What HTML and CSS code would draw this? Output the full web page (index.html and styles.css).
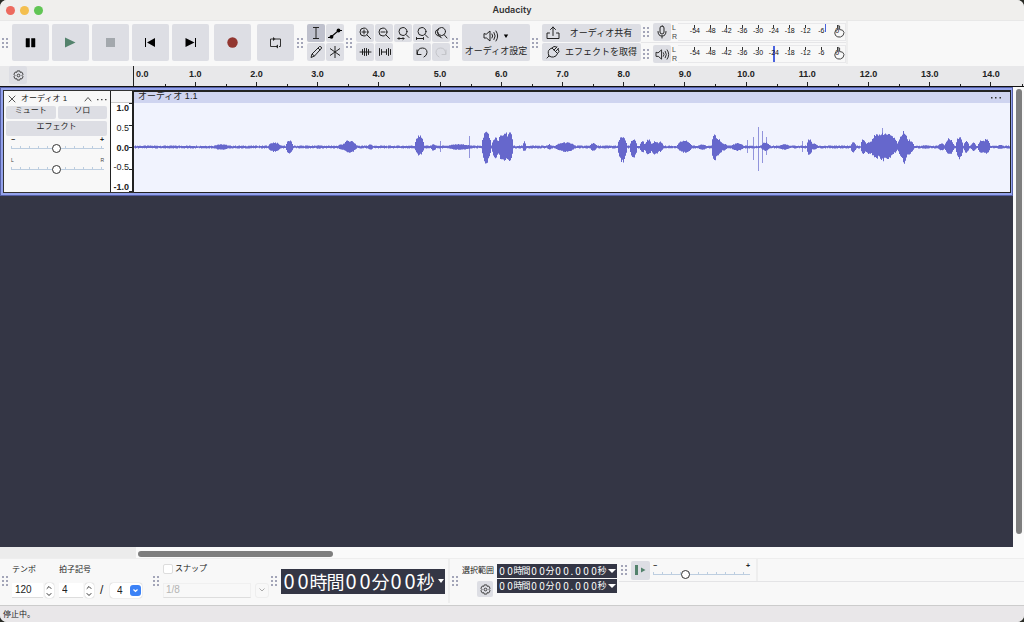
FILE: index.html
```html
<!DOCTYPE html>
<html lang="ja">
<head>
<meta charset="utf-8">
<title>Audacity</title>
<link rel="stylesheet" href="styles.css">
</head>
<body>
<svg class="defs" aria-hidden="true">
  <symbol id="gear" viewBox="0 0 12 12"><path d="M4.600 1h2.800l.5 1.600 1.600-.4L11 4.600 9.900 6 11 7.400 9.500 9.800l-1.600-.4L7.400 11H4.600l-.5-1.600-1.600.4L1 7.400 2.100 6 1 4.600l1.500-2.400 1.600.4z" fill="none" stroke="#333" stroke-linejoin="round"/><circle cx="6" cy="6" r="1.500" fill="none" stroke="#333"/></symbol>
  <symbol id="speaker" viewBox="0 0 16 14"><path d="M1 5v4h2.500L7 12V2L3.500 5zM9 5q1.500 2 0 4M11 3.500q2.500 3.500 0 7M13 2q3.500 5 0 10" fill="none" stroke="#222" stroke-linejoin="round" stroke-linecap="round"/></symbol>
  <symbol id="hand" viewBox="0 0 12 14"><path d="M5 5.500V2q.8-1 1.600 0v3.500M5 5.500l-2.500 1Q1 9 2.500 11.500q2 2 5 1.500Q11 12 11 8.500 10.500 5.500 6.600 5.500" fill="none" stroke="#444"/></symbol>
</svg>
<div class="window">
  <header class="titlebar">
    <div class="lights"><button class="light close" aria-label="閉じる"></button><button class="light mini" aria-label="しまう"></button><button class="light full" aria-label="拡大"></button></div>
    <h1>Audacity</h1>
  </header>

  <div class="toolbar">
    <i class="grip"></i>
    <div class="transport">
      <button class="btn" aria-label="一時停止"><svg width="37" height="37"><path d="M14 14.500h3.500v8.500H14zM19.500 14.500H23V23h-3.500z" stroke="#000" stroke-width=".5"/></svg></button>
      <button class="btn" aria-label="再生"><svg width="37" height="37"><path d="M13 13.500v10l10.500-5z" fill="#53826c"/></svg></button>
      <button class="btn" aria-label="停止"><svg width="37" height="37"><path d="M14 14h9v9h-9z" fill="#a3a8ad"/></svg></button>
      <button class="btn" aria-label="先頭へ"><svg width="37" height="37"><path d="M13 14h1v9h-1zM23 14v9l-8-4.500z"/></svg></button>
      <button class="btn" aria-label="末尾へ"><svg width="37" height="37"><path d="M23 14h1v9h-1zM13.500 14v9l9-4.500z"/></svg></button>
      <button class="btn record" aria-label="録音"><svg width="37" height="37"><circle cx="18.500" cy="18.500" r="5.200" fill="#923630"/></svg></button>
      <button class="btn loop" aria-label="ループ"><svg width="37" height="37"><path d="M16 15h-2.500v7.500H20M18 15h5.500v7.500H22" fill="none" stroke="#333"/><path d="M16 13l2.500 2-2.500 2zM21 20.500l-2.500 2 2.500 2z" fill="#222"/></svg></button>
    </div>
    <i class="grip"></i>
    <div class="tiles two">
      <button class="btn on" aria-label="選択ツール"><svg width="18" height="18"><path d="M6 3.500h6M6 14.500h6M9 3.500v11" fill="none" stroke="#222"/></svg></button>
      <button class="btn" aria-label="エンベロープツール"><svg width="18" height="18"><path d="M2 13.500h2.500l8-7H16" fill="none" stroke="#000" stroke-width="1.200"/><circle cx="5.500" cy="12.800" r="1.900"/><circle cx="12.500" cy="6.500" r="1.900"/></svg></button>
      <button class="btn" aria-label="描画ツール"><svg width="18" height="18"><path d="M4 14.500l1-3.500 7.500-7.500q1.500-.5 2.200 1.500L7.500 13zM11 5l2.200 2.200M5 11l2.500 2" fill="none" stroke="#222"/></svg></button>
      <button class="btn" aria-label="マルチツール"><svg width="18" height="18"><path d="M9 3v12M4 5.500l10 7M14 5.500l-10 7" fill="none" stroke="#222"/></svg></button>
    </div>
    <i class="grip"></i>
    <div class="tiles five">
      <button class="btn" aria-label="ズームイン"><svg class="ic" width="18" height="18"><circle cx="8" cy="8" r="4"/><path d="M11 11l3.500 3.500M6 8h4M8 6v4"/></svg></button>
      <button class="btn" aria-label="ズームアウト"><svg class="ic" width="18" height="18"><circle cx="8" cy="8" r="4"/><path d="M11 11l3.500 3.500M6 8h4"/></svg></button>
      <button class="btn" aria-label="選択範囲に合わせる"><svg class="ic" width="18" height="18"><circle cx="9" cy="7.500" r="4"/><path d="M12 10.500l3 3M4 14.500h6M5 13.500l-1 1 1 1M9 13.500l1 1-1 1"/></svg></button>
      <button class="btn" aria-label="全体に合わせる"><svg class="ic" width="18" height="18"><circle cx="9" cy="7.500" r="4"/><path d="M12 10.500l3 3M3.500 14.500h7M3.500 13.500v2M10.500 13.500v2"/></svg></button>
      <button class="btn" aria-label="ズーム切り替え"><svg class="ic" width="18" height="18"><circle cx="9.500" cy="7.500" r="4"/><path d="M12 10.500l3 3.500M6.500 5q-4 1.500-3 4.500 1.500 3 4 2.500l2 2M5.500 8q0 4 3 5"/></svg></button>
      <button class="btn" aria-label="トリム"><svg class="ic" width="18" height="18"><path d="M4 9h11M6.500 6.500v5M8.500 5.500v7M10.500 5.500v7M12.500 6.500v5"/></svg></button>
      <button class="btn" aria-label="無音化"><svg class="ic" width="18" height="18"><path d="M4.500 5.500v7M6.500 6.500v5M6.500 9h5M11.500 6.500v5M13.500 5.500v7M15.500 6.500v5"/></svg></button>
      <span></span>
      <button class="btn" aria-label="元に戻す"><svg class="ic" width="18" height="18"><path d="M4 7v4.500h4M4.300 11q0-6 5.200-6 4.500.3 4.500 4.500 0 3-3 4.500"/></svg></button>
      <button class="btn" aria-label="やり直す" disabled><svg class="ic dim" width="18" height="18"><path d="M14 7v4.500h-4M13.700 11q0-6-5.200-6-4.500.3-4.500 4.500 0 3 3 4.500"/></svg></button>
    </div>
    <i class="grip"></i>
    <button class="btn setup"><span class="setup-icon"><svg width="16" height="14"><use href="#speaker"/></svg><svg width="6" height="6"><path d="M.8 1.500h4.400L3 5z"/></svg></span>オーディオ設定</button>
    <i class="grip"></i>
    <div class="share">
      <button class="btn"><svg class="ic" width="16" height="16"><path d="M4.500 8H2v5.500h12V8h-2.500M8 10.500V2M5.500 4.500L8 2l2.500 2.500"/></svg><span>オーディオ共有</span></button>
      <button class="btn"><svg class="ic" width="16" height="16"><path d="M2 14l2-2q-2-5 1-7l2-1 5.500 5.500q-1 3-4 3.500-2 .5-4.500-1M7 4l2-1.500 2.500.5M12.500 9.500L14 7.500 13 5M9 6l3-3M10.500 7.500l3-3"/></svg><span>エフェクトを取得</span></button>
    </div>
    <div class="meters">
      <div class="meter">
        <i class="grip"></i>
        <button class="btn" aria-label="録音メーター"><svg class="ic" width="18" height="18"><rect x="7" y="3" width="4" height="8" rx="2"/><path d="M5 8.500q0 4.500 4 4.500t4-4.500M9 13v2"/></svg></button>
        <div class="lr"><span>L</span><span>R</span></div>
        <div class="scale"><span>-54</span><span>-48</span><span>-42</span><span>-36</span><span>-30</span><span>-24</span><span>-18</span><span>-12</span><span class="mark-half">-6</span><span class="zero">0<svg width="12" height="14"><use href="#hand"/></svg></span></div>
      </div>
      <div class="meter">
        <i class="grip"></i>
        <button class="btn" aria-label="再生メーター"><svg width="15" height="13"><use href="#speaker"/></svg></button>
        <div class="lr"><span>L</span><span>R</span></div>
        <div class="scale"><span>-54</span><span>-48</span><span>-42</span><span>-36</span><span>-30</span><span class="mark">-24</span><span>-18</span><span>-12</span><span>-6</span><span class="zero">0<svg width="12" height="14"><use href="#hand"/></svg></span></div>
      </div>
    </div>
  </div>

  <div class="timeline">
    <div class="timeline-head"><button class="gear" aria-label="タイムライン設定"><svg width="11" height="11"><use href="#gear"/></svg></button></div>
    <div class="ruler"><span>0.0</span><span>1.0</span><span>2.0</span><span>3.0</span><span>4.0</span><span>5.0</span><span>6.0</span><span>7.0</span><span>8.0</span><span>9.0</span><span>10.0</span><span>11.0</span><span>12.0</span><span>13.0</span><span>14.0</span><span class="last"></span></div>
  </div>

  <main class="workspace">
    <div class="tracks">
      <section class="track">
        <div class="panel">
          <div class="panel-title"><button aria-label="トラックを閉じる"><svg class="ic soft" width="8" height="8"><path d="M1 1l6 6M7 1L1 7"/></svg></button><h2>オーディオ 1</h2><button aria-label="折りたたむ"><svg class="ic soft" width="8" height="8"><path d="M1 6l3-3.500L7 6"/></svg></button><button aria-label="メニュー"><svg width="10" height="3"><path d="M0 1h1.500v1.200H0zM4 1h1.500v1.200H4zM8 1h1.500v1.200H8z" fill="#444"/></svg></button></div>
          <div class="panel-buttons"><button>ミュート</button><button>ソロ</button><button class="wide">エフェクト</button></div>
          <label class="slider"><span class="ends"><b>−</b><b>+</b></span><input type="range" aria-label="音量" min="0" max="100" value="49"></label>
          <label class="slider"><span class="ends"><small>L</small><small>R</small></span><input type="range" aria-label="パン" min="0" max="100" value="49"></label>
        </div>
        <div class="vruler"><div class="vruler-top"></div><div class="vscale"><b>1.0</b><span>0.5</span><b>0.0</b><span>-0.5</span><b>-1.0</b></div></div>
        <div class="clip">
          <div class="clip-title"><span>オーディオ 1.1</span><button aria-label="クリップメニュー"><svg width="12" height="3"><path d="M1 1h1.500v1.500H1zM5 1h1.500v1.500H5zM9.500 1H11v1.500H9.500z" fill="#333"/></svg></button></div>
          <svg class="wave" viewBox="0 0 876 89" preserveAspectRatio="none"><path id="spikes" fill="#9294dc"/><path id="wave" fill="#6667cc"/></svg>
        </div>
      </section>
    </div>
    <div class="vscroll"><div class="thumb"></div></div>
  </main>
  <div class="hscroll"><div class="thumb"></div></div>

  <footer class="bottom">
    <i class="grip"></i>
    <div class="signature">
      <label for="tempo">テンポ</label><label class="wide" for="beats">拍子記号</label>
      <div class="stepper"><input id="tempo" value="120"><button aria-label="テンポ増減"><svg class="ic heavy" width="8" height="14"><path d="M2 4.500l2-2 2 2M2 9.500l2 2 2-2"/></svg></button></div>
      <div class="stepper small"><input id="beats" value="4"><button aria-label="拍子増減"><svg class="ic heavy" width="8" height="14"><path d="M2 4.500l2-2 2 2M2 9.500l2 2 2-2"/></svg></button></div>
      <span class="slash">/</span>
      <div class="pick"><select aria-label="音符"><option>4</option></select><svg width="11" height="11"><path d="M3.500 4.500l2 2 2-2" fill="none" stroke="#fff" stroke-width="1.200"/></svg></div>
    </div>
    <i class="grip"></i>
    <div class="snap">
      <label><input type="checkbox">スナップ</label>
      <div class="snap-row"><select aria-label="スナップ単位" disabled><option>1/8</option></select><span class="snap-arrow"><svg width="8" height="8"><path d="M1.500 2.500L4 5l2.500-2.500" fill="none" stroke="#aaa"/></svg></span></div>
    </div>
    <i class="grip"></i>
    <div class="time big"><span>0</span><span>0</span><em>時</em><em>間</em><span>0</span><span>0</span><em>分</em><span>0</span><span>0</span><em>秒</em><button aria-label="表示形式"></button></div>
    <div class="selection">
      <i class="grip"></i>
      <div class="sel-head"><span>選択範囲</span><button class="gear" aria-label="選択範囲設定"><svg width="11" height="11"><use href="#gear"/></svg></button></div>
      <div class="sel-times">
        <div class="time"><span>0</span><span>0</span><em>時</em><em>間</em><span>0</span><span>0</span><em>分</em><span>0</span><span>0</span><i>.</i><span>0</span><span>0</span><span>0</span><em>秒</em><button aria-label="開始の表示形式"></button></div>
        <div class="time"><span>0</span><span>0</span><em>時</em><em>間</em><span>0</span><span>0</span><em>分</em><span>0</span><span>0</span><i>.</i><span>0</span><span>0</span><span>0</span><em>秒</em><button aria-label="終了の表示形式"></button></div>
      </div>
    </div>
    <div class="speed">
      <i class="grip"></i>
      <button class="btn" aria-label="指定速度で再生"><svg width="19" height="19"><path d="M4 4h3v10H4zM10 6.500v5L14.500 9z" fill="#53826c"/></svg></button>
      <label class="slider"><span class="ends"><b>−</b><b>+</b></span><input type="range" aria-label="再生速度" min="0" max="100" value="32"></label>
    </div>
  </footer>
  <div class="status">停止中。</div>
</div>
<script src="wave.js"></script>
</body>
</html>
```

FILE: styles.css
```css
* { box-sizing: border-box; }
body {
  margin: 0; height: 100vh; background: #2a2c26; color: #222;
  font: 9px/12px "Liberation Sans", "Noto Sans CJK JP", sans-serif;
}
button, input, select { font: inherit; color: inherit; border: 0; padding: 0; margin: 0; background: none; border-radius: 0; }
h1, h2 { margin: 0; font-size: inherit; }
svg { display: block; }
em, i { font-style: normal; }
.defs { position: absolute; width: 0; height: 0; }
.window { height: 100%; display: flex; flex-direction: column; background: #f8f8f8; border-radius: 7px; overflow: hidden; }
.ic { fill: none; stroke: #222; stroke-linecap: round; stroke-linejoin: round; }
.dim { stroke: #c4c5ca; }
.soft { stroke: #555; }
.heavy { stroke: #333; }

.titlebar { height: 20px; display: grid; grid-template-columns: 1fr auto 1fr; align-items: center; background: #f0efed; flex: none; }
.titlebar h1 { font: 600 9px/12px Inter, sans-serif; color: #333; }
.lights { display: flex; gap: 5px; padding-left: 6px; }
.light { width: 9px; height: 9px; border-radius: 50%; }
.close { background: #ed6a5e; }
.mini { background: #f4bf4f; }
.full { background: #61c554; }

.toolbar { display: flex; align-items: center; height: 46px; padding-bottom: 2px; border-top: 1px solid #e8e8e8; flex: none; }
.grip { flex: none; width: 12px; height: 12px; background: radial-gradient(circle, #a3a5b8 0 1px, transparent 1px) 0 0 / 4px 4px content-box; padding: 0 3px 0 1px; }
.btn { display: flex; align-items: center; justify-content: center; background: #dddee4; border-radius: 2px; }
.btn.on { background: #bfc1cd; }
.transport { display: flex; gap: 3px; padding-right: 1px; }
.transport .btn { width: 37px; height: 37px; }
.transport .record { margin-left: 2px; }
.transport .loop { margin-left: 3px; }
.tiles { display: grid; grid-auto-rows: 18px; gap: 1px; }
.two { grid-template-columns: repeat(2, 18px); }
.five { grid-template-columns: repeat(5, 18px); }
.setup { flex-direction: column; width: 68px; height: 37px; gap: 2px; white-space: nowrap; }
.setup-icon { display: flex; align-items: center; gap: 4px; }
.share { display: grid; grid-auto-rows: 18px; gap: 1px; width: 99px; }
.share .btn { padding-left: 3px; justify-content: flex-start; }
.share span { flex: 1; white-space: nowrap; }
.meters { display: grid; grid-template-rows: 21px 23px; width: 207px; height: 100%; border-right: 2px solid #eee; }
.meter { display: flex; align-items: center; }
.meter + .meter { border-top: 1px solid #e6e6e8; }
.meter .btn { width: 18px; height: 18px; flex: none; }
.lr { display: flex; flex-direction: column; width: 7px; padding-left: 1px; font-size: 7px; line-height: 9px; color: #444; }
.scale { flex: 1; display: grid; grid-template-columns: repeat(10, 1fr); height: 18px; padding-left: 9px; border: solid #e8e8ea; border-width: 1px 1px 1px 0; font-size: 7px; line-height: 14px; text-align: center; color: #111; }
.scale span { background: linear-gradient(#333, #333) 50% 1px / 1px 3px no-repeat; }
.scale .mark { background: linear-gradient(#4a62dd, #4a62dd) 50% 0 / 2px 100% no-repeat; }
.scale .mark-half { background: linear-gradient(#4a62dd, #4a62dd) 80% 0 / 1px 8px no-repeat; }
.scale .zero { position: relative; }
.zero svg { position: absolute; left: 4px; top: 0; }

.timeline { display: flex; height: 21px; background: #e8e8ea; border-bottom: 1px solid #111; flex: none; }
.timeline-head { width: 134px; padding: 0 0 0 9px; border-right: 1px solid #222; }
.gear { display: flex; align-items: center; justify-content: center; width: 18px; height: 18px; background: #dddee4; border-radius: 2px; }
.ruler { flex: 1; display: grid; grid-template-columns: 50fr repeat(14, 100fr) 4fr; font-weight: bold; line-height: 17px; text-align: center; }
.ruler span { min-width: 0; background: linear-gradient(#222, #222) 50% 100% / 1px 4px no-repeat, linear-gradient(#222, #222) 0 100% / 1px 2px no-repeat; }
.ruler span:first-child { text-align: left; padding-left: 2px; background: none; }
.ruler .last { background: linear-gradient(#222, #222) 0 100% / 1px 2px no-repeat; }

.workspace { flex: 1; min-height: 0; display: flex; background: #fafafa; }
.tracks { flex: 1; background: #343645; }
.track { display: flex; height: 109px; border: solid #93a2ec; border-width: 3px 2px 3px 3px; box-shadow: inset 0 0 0 1px #333; outline: 1px solid #555fa5; outline-offset: -1px; }
.panel { width: 106px; margin: 1px 0 1px 1px; padding: 1px 3px 0 2px; background: #f8f8f8; }
.panel-title { display: flex; align-items: center; gap: 5px; height: 14px; padding: 0 0 0 2px; }
.panel-title h2 { flex: 1; font-size: 8px; font-weight: normal; white-space: nowrap; }
.panel-buttons { display: grid; grid-template-columns: 1fr 1fr; gap: 2px; font-size: 8px; }
.panel-buttons button { height: 13px; line-height: 8px; padding-bottom: 4px; background: #dddee4; border-radius: 2px; }
.panel-buttons .wide { grid-column: span 2; height: 15px; }
.slider { display: block; padding: 0 3px 0 5px; }
.ends { display: flex; justify-content: space-between; font-size: 7px; line-height: 7px; height: 6px; }
.ends small { font-size: 5px; color: #444; }
.slider input { display: block; appearance: none; width: 100%; height: 11px; background: linear-gradient(#bdcee0, #bdcee0) 0 6px / 100% 1px no-repeat, repeating-linear-gradient(90deg, #bdcee0 0 1px, transparent 1px 9px) 0 4px / 100% 2px no-repeat; }
.slider + .slider { padding-top: 4px; }
.slider input::-webkit-slider-thumb { appearance: none; width: 9px; height: 9px; border: 1px solid #333; border-radius: 50%; background: #fff; margin-top: 1px; }
.vruler { width: 24px; margin: 1px 0; background: #fff; border: solid #222; border-width: 0 2px 0 1px; display: flex; flex-direction: column; }
.vruler-top { height: 12px; background: #f5f5f7; border-bottom: 1px solid #ccc; }
.vscale { flex: 1; display: flex; flex-direction: column; justify-content: space-between; text-align: right; padding-right: 3px; line-height: 10px; background: repeating-linear-gradient(#222 0 1px, transparent 1px 22px) 100% 0 / 3px 100% no-repeat; }
.clip { flex: 1; display: flex; flex-direction: column; background: #f1f3fe; border: solid #222; border-width: 2px 1px 1px 0; }
.clip-title { display: flex; align-items: center; justify-content: space-between; height: 11px; padding: 0 8px 0 4px; background: #cfd4f0; }
.clip-title span { line-height: 9px; height: 12px; }
.wave { flex: 1; width: 100%; min-height: 0; }
.vscroll { width: 11px; padding: 2px 2px 13px 3px; }
.vscroll .thumb { height: 100%; border-radius: 3px; background: #7e7e7e; }
.hscroll { height: 12px; padding: 4px 0 2px 138px; background: linear-gradient(90deg, #ececec 136px, #fafafa 136px); border-bottom: 1px solid #eee; flex: none; }
.hscroll .thumb { width: 22%; height: 6px; border-radius: 3px; background: #7e7e7e; }

.bottom { display: flex; height: 46px; align-items: center; padding-bottom: 2px; flex: none; }
.signature { display: grid; grid-template-columns: 47px 39px 12px 32px; align-content: center; width: 139px; row-gap: 7px; font-size: 8px; }
.signature .wide { grid-column: 2 / 5; }
.stepper { display: flex; height: 15px; gap: 2px; font-size: 10px; }
.stepper input { width: 31px; padding-left: 3px; background: #fff; border-bottom: 1px solid #ddd; }
.stepper.small input { width: 24px; }
.stepper button { width: 9px; background: #fff; border-radius: 3px; box-shadow: 0 0 1px #999; }
.slash { font-size: 12px; line-height: 15px; padding-left: 2px; }
.pick { display: flex; align-items: center; height: 15px; background: #fff; border-radius: 3px; box-shadow: 0 0 1px #999; font-size: 10px; }
.pick select { appearance: none; width: 20px; padding-left: 7px; }
.pick svg { background: #3c82f6; border-radius: 3px; }
.snap { width: 106px; display: flex; flex-direction: column; gap: 8px; font-size: 8px; padding-bottom: 2px; }
.snap label { display: flex; align-items: center; gap: 2px; }
.snap label input { appearance: none; width: 10px; height: 10px; background: #fff; border: 1px solid #ddd; border-radius: 2px; }
.snap-row { display: flex; gap: 4px; font-size: 10px; color: #b4b4b4; }
.snap-row select { appearance: none; flex: 1; height: 15px; padding-left: 2px; border: 1px solid #f0f0f0; border-bottom-color: #ddd; opacity: 1; color: #b4b4b4; }
.snap-arrow { display: grid; place-items: center; width: 14px; border: 1px solid #eee; border-radius: 3px; }
.time { display: flex; align-items: center; background: #343645; color: #fff; height: 14px; width: 120px; padding-left: 1px; font-family: "Noto Sans CJK JP", sans-serif; }
.time span { width: 8px; text-align: center; font-size: 10px; }
.time em { width: 8px; font-size: 9px; display: flex; justify-content: center; }
.time i { width: 4px; font-size: 10px; text-align: center; }
.time button { margin-left: auto; margin-right: 1px; border: 4px solid transparent; border-top-color: #fff; border-bottom: 0; }
.time.big { width: 164px; height: 25px; }
.time.big span { width: 14px; font-size: 20px; }
.time.big em { width: 17px; font-size: 18px; }
.time.big button { border-width: 4px 3px 0; }
.selection { display: flex; align-items: center; height: 100%; margin-left: 3px; border-left: 2px solid #eee; }
.sel-head { width: 34px; display: flex; flex-direction: column; gap: 4px; align-items: flex-start; font-size: 8px; white-space: nowrap; }
.sel-head .gear { width: 16px; height: 16px; margin-left: 15px; }
.sel-times { display: grid; gap: 1px; padding: 0 0 6px 1px; }
.speed { display: flex; align-items: center; align-self: flex-start; flex: 1; height: 23px; margin-left: 2px; border-bottom: 1px solid #e4e4e6; }
.speed .btn { width: 19px; height: 19px; }
.speed .slider { width: 108px; height: 100%; padding: 3px 6px 0 3px; border-right: 2px solid #eee; }
.status { height: 17px; padding-left: 3px; border-top: 1px solid #ccc; background: #e9e7e9; font-size: 8px; line-height: 17px; flex: none; }
```

FILE: wave.js
```js
// Bursts: centre, half width, peak above and peak below the centre line.
const bursts = [
  [87,8,3,3],[140,6,5,5],[155,3,7,7],[184,3,2,2],[207,3,3,3],[215,7,7,6],[236,2,3,3],
  [285,4,12,9],[299,2,3,4],[325,14,3,3],[352,4,17,17],[361,3,10,12],[367,3,13,13],[371,4,16,15],[375,3,16,15],
  [390,1,6,5],[415,1,3,3],[431,10,5,5],[459,3,4,4],[488,4,12,16],[499,3,8,12],[508,2,6,6],
  [514,3,8,8],[521,4,6,8],[526,2,6,5],[550,7,7,6],[568,4,3,3],[580,2,13,15],[583,5,9,9],[588,5,4,4],
  [603,6,4,4],[631,4,5,4],[650,5,3,3],[675,2,9,9],[679,4,4,3],[719,2,5,6],[729,2,9,8],
  [736,5,6,8],[742,6,13,12],[748,6,16,15],[754,6,15,13],[759,4,10,7],[768,4,13,12],[770,3,17,17],[774,5,8,8],
  [791,5,2,2],[807,3,4,4],[815,4,9,8],[825,3,11,13],[832,2,7,6],[839,2,5,4],[848,4,8,7],[852,3,9,7],[866,4,2,2]
];
const thin = [[306,6,5],[335,11,11],[613,7,6],[619,10,13],[624,20,24],[628,16,16],[632,10,8],[668,6,5],[748,19,10]];
const mid = 44;
const noise = n => { const v = Math.sin(n * 12.9898) * 43758.5453; return v - Math.floor(v); };
let d = "";
for (let x = 0; x < 876; x++) {
  let up = .8 + noise(x) * .8, down = .8 + noise(x + 999) * .8;
  for (const [c, w, u, v] of bursts) {
    const t = Math.abs(x - c) / (w + 1);
    if (t < 1) {
      const k = Math.pow(1 - t * t, .8);
      up = Math.max(up, u * k * (.75 + .25 * noise(x + 51)));
      down = Math.max(down, v * k * (.75 + .25 * noise(x + 77)));
    }
  }
  d += `M${x} ${mid - up}h1V${mid + down}h-1z`;
}
document.getElementById("wave").setAttribute("d", d);
document.getElementById("spikes").setAttribute("d", thin.map(([x, u, v]) => `M${x} ${mid - u}h1V${mid + v}h-1z`).join(""));
```
